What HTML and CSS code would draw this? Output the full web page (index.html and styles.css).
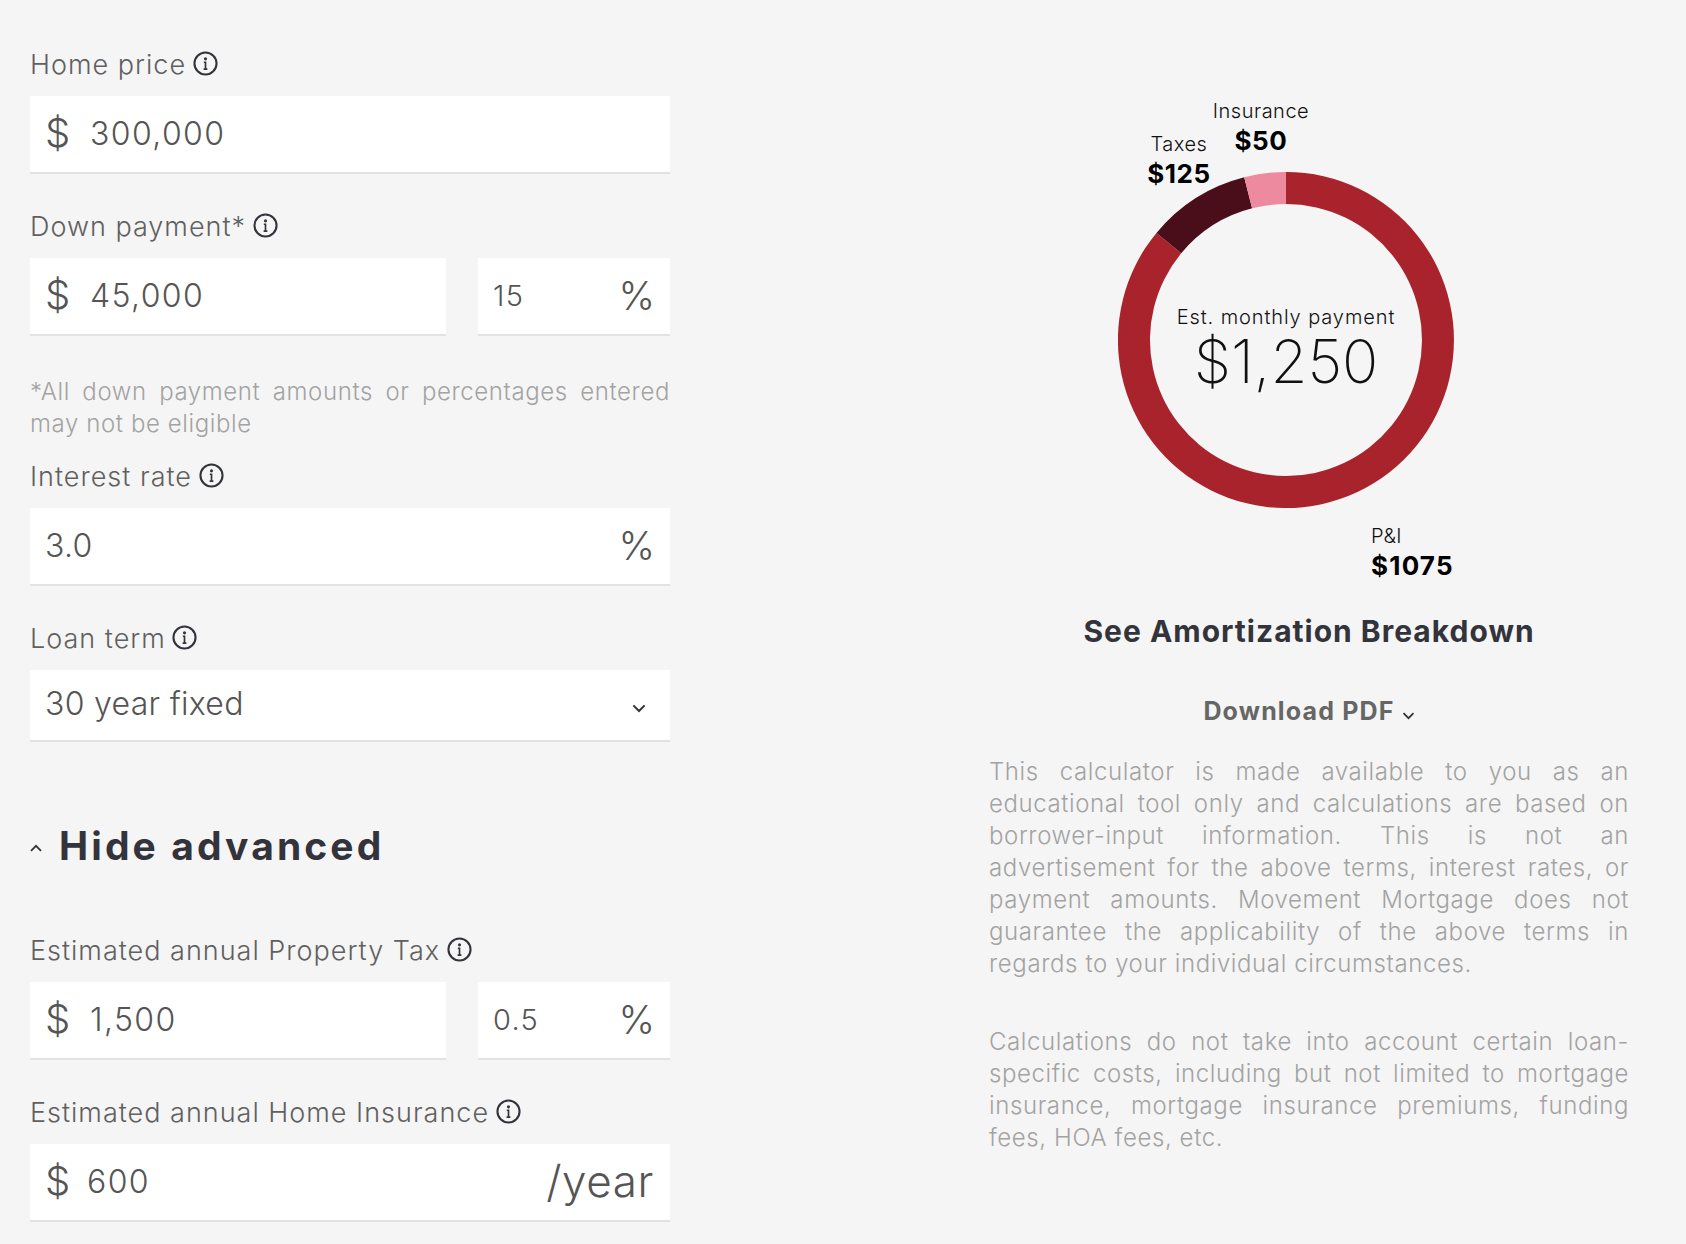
FILE: index.html
```html
<!DOCTYPE html>
<html lang="en">
<head>
<meta charset="utf-8">
<title>Mortgage calculator</title>
<link rel="stylesheet" href="styles.css">
</head>
<body>
<svg class="sprite" width="0" height="0" aria-hidden="true">
  <symbol id="info" viewBox="0 0 24 24">
    <circle cx="12" cy="12" r="10.6" fill="none" stroke="currentColor" stroke-width="2"/>
    <circle cx="12" cy="7.5" r="1.5" fill="currentColor"/>
    <path d="M10.4 10.8h1.6v6.6M10.2 17.4h3.6" fill="none" stroke="currentColor" stroke-width="1.6"/>
  </symbol>
  <symbol id="chev" viewBox="0 0 12 8">
    <path d="M1 1.2 6 6.2 11 1.2" fill="none" stroke="currentColor" stroke-width="1.8"/>
  </symbol>
</svg>
<main class="page">
  <section class="form">
    <div class="label">Home price <svg class="info"><use href="#info"/></svg></div>
    <div class="box"><span class="dollar">$</span><span class="val">300,000</span></div>

    <div class="label gap">Down payment* <svg class="info"><use href="#info"/></svg></div>
    <div class="pair">
      <div class="box"><span class="dollar">$</span><span class="val">45,000</span></div>
      <div class="box small"><span class="val sm">15</span><span class="pct">%</span></div>
    </div>
    <p class="note">*All down payment amounts or percentages entered may not be eligible</p>

    <div class="label tight">Interest rate <svg class="info"><use href="#info"/></svg></div>
    <div class="box"><span class="val plain">3.0</span><span class="pct">%</span></div>

    <div class="label gap">Loan term <svg class="info"><use href="#info"/></svg></div>
    <div class="box select"><span class="val plain">30 year fixed</span><svg class="chev"><use href="#chev"/></svg></div>

    <div class="toggle"><svg class="chev up"><use href="#chev"/></svg><h2>Hide advanced</h2></div>

    <div class="label">Estimated annual Property Tax <svg class="info"><use href="#info"/></svg></div>
    <div class="pair">
      <div class="box"><span class="dollar">$</span><span class="val">1,500</span></div>
      <div class="box small"><span class="val sm">0.5</span><span class="pct">%</span></div>
    </div>

    <div class="label gap">Estimated annual Home Insurance <svg class="info"><use href="#info"/></svg></div>
    <div class="box"><span class="dollar">$</span><span class="val snug">600</span><span class="year">/year</span></div>
  </section>

  <section class="summary">
    <div class="chart">
      <svg class="donut" viewBox="0 0 336 336">
        <path class="pi" d="M168 0A168 168 0 1 1 38.5 60.9L63.2 81.3A136 136 0 1 0 168 32Z"/>
        <path class="tax" d="M38.5 60.9A168 168 0 0 1 126.2 5.3L134.1 36.3A136 136 0 0 0 63.2 81.3Z"/>
        <path class="ins" d="M126.2 5.3A168 168 0 0 1 168 0V32A136 136 0 0 0 134.1 36.3Z"/>
      </svg>
      <div class="center">
        <div class="est">Est. monthly payment</div>
        <div class="total">$1,250</div>
      </div>
      <div class="tag tag-ins">Insurance<b>$50</b></div>
      <div class="tag tag-tax">Taxes<b>$125</b></div>
      <div class="tag tag-pi">P&amp;I<b>$1075</b></div>
    </div>
    <div class="link">See Amortization Breakdown</div>
    <div class="pdf">Download PDF <svg class="chev pdfchev"><use href="#chev"/></svg></div>
    <p class="legal">This calculator is made available to you as an educational tool only and calculations are based on borrower-input information. This is not an advertisement for the above terms, interest rates, or payment amounts. Movement Mortgage does not guarantee the applicability of the above terms in regards to your individual circumstances.</p>
    <p class="legal second">Calculations do not take into account certain loan-specific costs, including but not limited to mortgage insurance, mortgage insurance premiums, funding fees, HOA fees, etc.</p>
  </section>
</main>
</body>
</html>
```

FILE: styles.css
```css
* { box-sizing: border-box; }
html, body { margin: 0; height: 1244px; overflow: hidden; background: #f5f5f5; }
body { font-family: Inter, "Liberation Sans", sans-serif; font-weight: 300; color: #555; }
.sprite { position: absolute; }
.page { display: flex; justify-content: space-between; padding: 48px 57px 0 30px; }
.form, .summary { width: 640px; }

.label { display: flex; align-items: center; height: 33px; font-size: 27px; font-weight: 300; color: #606060; letter-spacing: 1px; white-space: pre; }
.label.gap { margin-top: 36px; }
.label.tight { margin-top: 20px; }
.info { width: 25px; height: 25px; margin-left: -2px; color: #33343b; position: relative; top: -1px; }

.box { display: flex; align-items: center; height: 78px; margin-top: 15px; padding: 0 16px 2px 15px; background: #fff; border-bottom: 2px solid #e2e2e2; flex: 1; }
.box.small { flex: 0 0 192px; padding-left: 15px; }
.box.select { height: 72px; padding-bottom: 3px; }
.pair { display: flex; gap: 32px; }
.dollar { font-size: 40px; line-height: 1; width: 45px; color: #555; }
.val { font-size: 32px; color: #555; letter-spacing: 1.4px; }
.val.plain { margin-left: 0; letter-spacing: .3px; }
.val.snug { margin-left: -3px; }
.val.sm { font-size: 29px; letter-spacing: 1.3px; }
.pct { margin-left: auto; margin-right: -1px; font-size: 39px; }
.year { margin-left: auto; font-size: 44px; letter-spacing: .6px; }

.note { margin: 40px 0 0; font-size: 24px; line-height: 32px; color: #a3a3a3; text-align: justify; letter-spacing: .6px; }

.chev { width: 14px; height: 9px; color: #33343b; }
.select .chev { margin-left: auto; margin-right: 8px; margin-top: 10px; }
.toggle { display: flex; align-items: center; height: 50px; margin: 78px 0 64px; }
.up { transform: rotate(180deg); width: 12px; height: 8px; margin-left: 0; margin-right: 17px; position: relative; top: 3px; }
.toggle h2 { margin: 0; font-size: 39px; font-weight: 700; color: #33343b; letter-spacing: 3.1px; }

.summary { padding-top: 0; }
.chart { position: relative; width: 640px; height: 530px; margin-top: -48px; }
.donut { position: absolute; left: 129px; top: 172px; width: 336px; height: 336px; }
.pi { fill: #a8232b; }
.tax { fill: #4a0e1b; }
.ins { fill: #ee8a9f; }
.center { position: absolute; left: 129px; top: 172px; width: 336px; height: 336px; display: flex; flex-direction: column; align-items: center; color: #111; padding-top: 132px; }
.est { font-size: 20px; line-height: 26px; font-weight: 300; letter-spacing: .9px; }
.total { font-size: 60px; line-height: 62px; font-weight: 200; }
.tag { position: absolute; display: flex; flex-direction: column; font-size: 20px; line-height: 26px; color: #111; letter-spacing: .5px; }
.tag b { font-size: 26px; line-height: 34px; font-weight: 700; color: #000; letter-spacing: .6px; }
.tag-ins { left: 221px; top: 98px; align-items: center; width: 102px; }
.tag-tax { left: 151px; top: 131px; align-items: center; width: 78px; }
.tag-pi { left: 382px; top: 523px; }
.tag-pi b { letter-spacing: 1.2px; }

.link { margin-top: 83px; text-align: center; font-size: 30px; font-weight: 700; color: #33343b; letter-spacing: 1px; }
.pdf { margin-top: 47px; text-align: center; font-size: 25px; font-weight: 700; color: #666; letter-spacing: 1.15px; }
.pdfchev { width: 13px; height: 8px; }
.legal { margin: 30px 0 0; font-size: 24px; line-height: 32px; color: #a3a3a3; text-align: justify; letter-spacing: .6px; }
.legal.second { margin-top: 46px; }
```
